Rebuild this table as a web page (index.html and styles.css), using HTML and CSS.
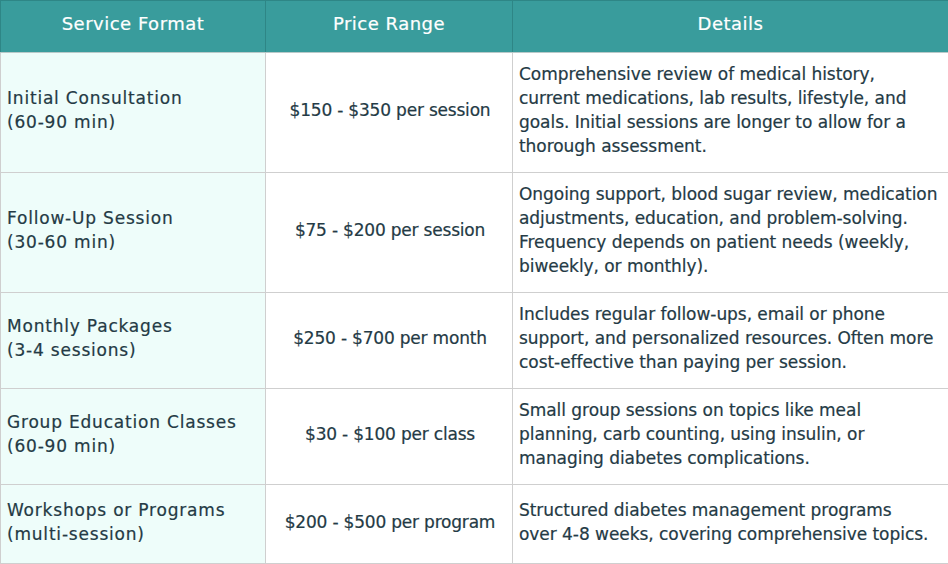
FILE: index.html
```html
<!DOCTYPE html>
<html lang="en">
<head>
<meta charset="utf-8">
<title>Diabetes Education Pricing</title>
<link rel="stylesheet" href="styles.css">
</head>
<body>
<table class="price-table">
  <colgroup>
    <col class="col-format">
    <col class="col-price">
    <col class="col-details">
  </colgroup>
  <thead>
    <tr>
      <th>Service Format</th>
      <th>Price Range</th>
      <th>Details</th>
    </tr>
  </thead>
  <tbody>
    <tr class="row-4">
      <td class="format">Initial Consultation<br>(60-90 min)</td>
      <td class="price">$150 - $350 per session</td>
      <td class="details">Comprehensive review of medical history,<br>current medications, lab results, lifestyle, and<br>goals. Initial sessions are longer to allow for a<br>thorough assessment.</td>
    </tr>
    <tr class="row-4">
      <td class="format">Follow-Up Session<br>(30-60 min)</td>
      <td class="price">$75 - $200 per session</td>
      <td class="details">Ongoing support, blood sugar review, medication<br>adjustments, education, and problem-solving.<br>Frequency depends on patient needs (weekly,<br>biweekly, or monthly).</td>
    </tr>
    <tr class="row-3">
      <td class="format">Monthly Packages<br>(3-4 sessions)</td>
      <td class="price">$250 - $700 per month</td>
      <td class="details">Includes regular follow-ups, email or phone<br>support, and personalized resources. Often more<br>cost-effective than paying per session.</td>
    </tr>
    <tr class="row-3">
      <td class="format">Group Education Classes<br>(60-90 min)</td>
      <td class="price">$30 - $100 per class</td>
      <td class="details">Small group sessions on topics like meal<br>planning, carb counting, using insulin, or<br>managing diabetes complications.</td>
    </tr>
    <tr class="row-last">
      <td class="format">Workshops or Programs<br>(multi-session)</td>
      <td class="price">$200 - $500 per program</td>
      <td class="details">Structured diabetes management programs<br>over 4-8 weeks, covering comprehensive topics.</td>
    </tr>
  </tbody>
</table>
</body>
</html>
```
FILE: styles.css
```css
* { box-sizing: border-box; }
html, body { margin: 0; padding: 0; background: #ffffff; }
body {
  font-family: "DejaVu Sans", "Open Sans", sans-serif;
  color: #243a45;
  width: 948px;
  height: 564px;
  overflow: hidden;
}
.price-table {
  width: 948px;
  border-collapse: collapse;
  table-layout: fixed;
  font-size: 17px;
  line-height: 24px;
}
.col-format { width: 265px; }
.col-price { width: 247px; }
.col-details { width: 436px; }
.price-table th {
  height: 52px;
  background: #399c9c;
  color: #ffffff;
  font-weight: normal;
  font-size: 18px;
  letter-spacing: 0.5px;
  text-align: center;
  border: 1px solid #2e8686;
  border-bottom-color: #b9c9c9;
  padding: 0 6px 5px;
  -webkit-text-stroke: 0.2px #ffffff;
}
.price-table td {
  border: 1px solid #cfcfcf;
  padding: 9px 4px 14px 6px;
  vertical-align: middle;
  -webkit-text-stroke: 0.2px #243a45;
}
.price-table .format {
  background: #eefdfa;
  letter-spacing: 0.8px;
}
.price-table .price {
  text-align: center;
  letter-spacing: -0.2px;
}
.price-table .details {
  letter-spacing: -0.05px;
  white-space: nowrap;
}
.row-4 td { height: 119px; }
.row-3 td { height: 95px; }
.row-last td { height: 79px; }
```
